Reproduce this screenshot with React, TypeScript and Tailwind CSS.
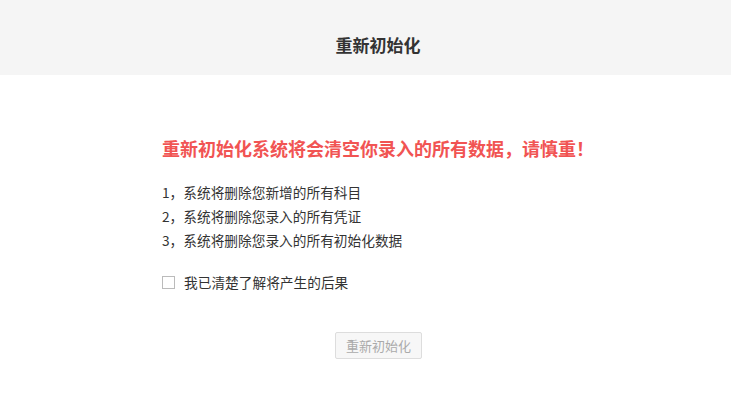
import { useState } from "react"

const items = [
  "1，系统将删除您新增的所有科目",
  "2，系统将删除您录入的所有凭证",
  "3，系统将删除您录入的所有初始化数据",
]

export default function App() {
  const [agreed, setAgreed] = useState(false)

  return (
    <div
      className="min-h-screen w-[731px] bg-white text-[#333]"
      style={{ fontFamily: '"Noto Sans CJK SC", "Noto Sans", sans-serif' }}
    >
      {/* Header */}
      <header className="flex h-[75px] items-center justify-center bg-[#f5f5f5] pl-[25px] pt-[14px]">
        <h1 className="text-[17px] font-bold text-[#333]">重新初始化</h1>
      </header>

      {/* Main */}
      <main className="ml-[162px] w-[433px] pt-[57px]">
        <h2 className="text-[18px] font-bold leading-[32px] text-[#f15453]">
          重新初始化系统将会清空你录入的所有数据，请慎重！
        </h2>

        <ul className="mt-[16px] text-[13.7px] leading-[24px] text-[#333]">
          {items.map((item) => (
            <li key={item}>{item}</li>
          ))}
        </ul>

        <label className="mt-[18px] flex cursor-pointer items-center text-[13.7px] leading-[24px] text-[#333]">
          <input
            type="checkbox"
            checked={agreed}
            onChange={(e) => setAgreed(e.target.checked)}
            className="h-[13px] w-[13px] cursor-pointer appearance-none border border-[#bbb] bg-white checked:bg-[#f15453]"
          />
          <span className="ml-[9px]">我已清楚了解将产生的后果</span>
        </label>

        <div className="mt-[38px] flex justify-center">
          <button
            disabled={!agreed}
            className="h-[27px] rounded-[2px] border border-[#ddd] bg-[#f7f7f7] px-[10px] text-[13px] text-[#aaa] enabled:text-[#333]"
          >
            重新初始化
          </button>
        </div>
      </main>
    </div>
  )
}
